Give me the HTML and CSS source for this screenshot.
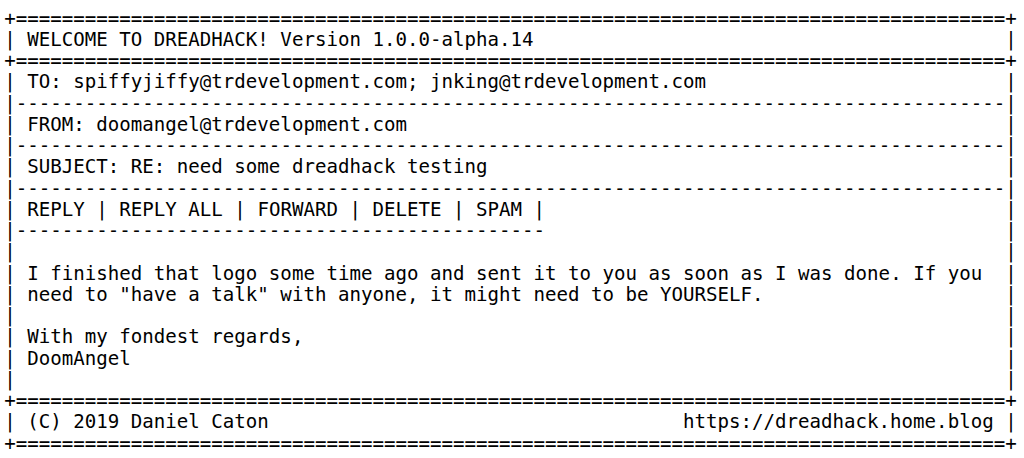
FILE: index.html
```html
<!DOCTYPE html>
<html>
  <head>
    <meta charset="UTF-8">
    <title>DreadHack</title>
    <link rel="stylesheet" href="styles.css">
  </head>
  <body>
    <div class="screen">
      <div class="row"><span>+</span><span class="fill">======================================================================================</span><span>+</span></div>
      <div class="row"><span>|</span><span class="cell">WELCOME TO DREADHACK! Version 1.0.0-alpha.14</span><span>|</span></div>
      <div class="row"><span>+</span><span class="fill">======================================================================================</span><span>+</span></div>

      <div class="row"><span>|</span><span class="cell">TO: spiffyjiffy@trdevelopment.com; jnking@trdevelopment.com</span><span>|</span></div>
      <div class="row"><span>|</span><span class="fill">--------------------------------------------------------------------------------------</span><span>|</span></div>
      <div class="row"><span>|</span><span class="cell">FROM: doomangel@trdevelopment.com</span><span>|</span></div>
      <div class="row"><span>|</span><span class="fill">--------------------------------------------------------------------------------------</span><span>|</span></div>
      <div class="row"><span>|</span><span class="cell">SUBJECT: RE: need some dreadhack testing</span><span>|</span></div>
      <div class="row"><span>|</span><span class="fill">--------------------------------------------------------------------------------------</span><span>|</span></div>

      <!-- actions -->
      <div class="row"><span>|</span><span class="cell"><a href="#">REPLY</a> | <a href="#">REPLY ALL</a> | <a href="#">FORWARD</a> | <a href="#">DELETE</a> | <a href="#">SPAM</a> |</span><span>|</span></div>
      <div class="row"><span>|</span><span class="fill"><span class="under">----------------------------------------------</span></span><span>|</span></div>

      <!-- message body -->
      <div class="row"><span>|</span><span class="cell"></span><span>|</span></div>
      <div class="row"><span>|</span><span class="cell">I finished that logo some time ago and sent it to you as soon as I was done. If you</span><span>|</span></div>
      <div class="row"><span>|</span><span class="cell">need to "have a talk" with anyone, it might need to be YOURSELF.</span><span>|</span></div>
      <div class="row"><span>|</span><span class="cell"></span><span>|</span></div>
      <div class="row"><span>|</span><span class="cell">With my fondest regards,</span><span>|</span></div>
      <div class="row"><span>|</span><span class="cell">DoomAngel</span><span>|</span></div>
      <div class="row"><span>|</span><span class="cell"></span><span>|</span></div>

      <div class="row"><span>+</span><span class="fill">======================================================================================</span><span>+</span></div>
      <div class="row footer"><span>|</span><span class="cell"><span>(C) 2019 Daniel Caton</span><a href="#">https://dreadhack.home.blog</a></span><span>|</span></div>
      <div class="row"><span>+</span><span class="fill">======================================================================================</span><span>+</span></div>
    </div>
  </body>
</html>
```

FILE: styles.css
```css
body {
  margin: 0;
  background-color: #fff;
  color: #000;
  font-family: "DejaVu Sans Mono", "Liberation Mono", monospace;
  font-size: 19.12px;
  line-height: 21.25px;
}
.screen {
  width: 88ch;
  padding: 7.5px 0 0 4.25px;
}
.row {
  display: flex;
  white-space: pre;
}
.fill {
  flex: 1;
}
.cell {
  flex: 1;
  padding-left: 1ch;
}
.under {
  display: block;
  width: 46ch;
}
.footer .cell {
  display: flex;
  justify-content: space-between;
  padding-right: 1ch;
}
a {
  color: inherit;
  text-decoration: none;
}
```
